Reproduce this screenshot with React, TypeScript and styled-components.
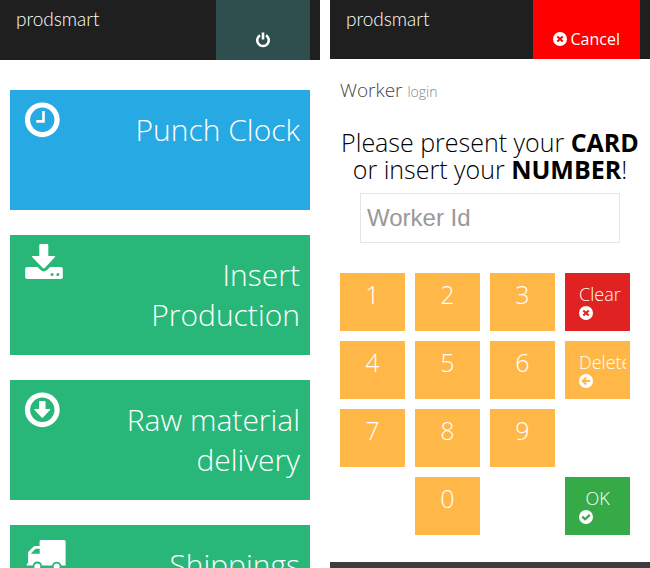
import React, { useState } from "react";
import styled, { createGlobalStyle } from "styled-components";

const GlobalStyle = createGlobalStyle`
  *, *::before, *::after { box-sizing: border-box; }
  body {
    margin: 0;
    background: #fff;
    color: #000;
    font-family: "Open Sans", sans-serif;
    font-weight: 300;
  }
  button, input { font: inherit; }
`;

const Page = styled.div`
  display: grid;
  grid-template-columns: minmax(0, 1fr) minmax(0, 1fr);
  column-gap: 10px;
  height: 100vh;
`;

const Panel = styled.section`
  display: flex;
  flex-direction: column;
  min-height: 0;
  overflow: auto;
  scrollbar-width: none;
`;

const TopBar = styled.header<{ $height: number }>`
  display: flex;
  flex: none;
  justify-content: space-between;
  height: ${(p) => p.$height}px;
  padding: 0 10px 0 16px;
  background: #1f1f1f;
`;

const Brand = styled.a`
  padding-top: 7px;
  color: #fff;
  font-family: Lato, sans-serif;
  font-size: 19px;
  font-weight: 300;
  line-height: 24px;
  text-decoration: none;
`;

const BarButton = styled.button<{ $tone: string }>`
  display: flex;
  align-items: center;
  justify-content: center;
  gap: 4px;
  min-width: 94px;
  padding: 19px 20px 0;
  border: 0;
  background: ${(p) => p.$tone};
  color: #fff;
  font-size: 16px;
  font-weight: 400;
  cursor: pointer;
`;

const TileList = styled.nav`
  display: flex;
  flex-direction: column;
  gap: 25px;
  padding: 30px 10px;
`;

const Tile = styled.a<{ $tone: string }>`
  display: flex;
  align-items: flex-start;
  justify-content: space-between;
  gap: 40px;
  min-height: 120px;
  padding: 8px 10px 8px 15px;
  background: ${(p) => p.$tone};
  color: #fff;
  text-decoration: none;
`;

const TileLabel = styled.span`
  padding-top: 12px;
  font-size: 30px;
  line-height: 40px;
  text-align: right;
`;

const Icon = styled.svg`
  display: block;
  flex: none;
`;

const Content = styled.main`
  padding: 17px 10px 27px;
`;

const Title = styled.h1`
  margin: 0;
  color: #444;
  font-size: 19px;
  font-weight: 300;
  line-height: 28px;
`;

const Subtitle = styled.small`
  color: #888;
  font-size: 14px;
`;

const Prompt = styled.label`
  display: block;
  margin-top: 23px;
  font-size: 25px;
  line-height: 27px;
  text-align: center;

  strong { font-weight: 700; }
`;

const WorkerInput = styled.input`
  display: block;
  width: calc(100% - 40px);
  height: 50px;
  margin: 10px 20px 0;
  padding: 0 6px;
  border: 1px solid #e5e5e5;
  border-radius: 0;
  font-family: "Liberation Sans", Arial, sans-serif;
  font-size: 24px;
  font-weight: 400;

  &::placeholder { color: #999; opacity: 1; }
`;

const Keypad = styled.div`
  display: grid;
  grid-template-columns: repeat(4, minmax(0, 1fr));
  gap: 10px;
  margin: 30px 10px 0 0;
`;

const DigitKey = styled.button<{ $column: number }>`
  grid-column: ${(p) => p.$column};
  height: 58px;
  padding: 0 0 16px;
  border: 0;
  background: #ffb848;
  color: #fff;
  font-size: 25px;
  font-weight: 300;
  cursor: pointer;
`;

const ActionKey = styled.button<{ $tone: string }>`
  display: flex;
  flex-direction: column;
  align-items: flex-start;
  grid-column: 4;
  height: 58px;
  padding: 10px 4px 0 14px;
  border: 0;
  background: ${(p) => p.$tone};
  color: #fff;
  cursor: pointer;
`;

const ActionLabel = styled.span`
  min-width: 37px;
  max-width: 100%;
  overflow: hidden;
  font-size: 18px;
  font-weight: 300;
  line-height: 23px;
  text-align: center;
`;

const Footer = styled.footer`
  flex: 1 0 6px;
  background: #3d3d3d;
`;

const PowerIcon = () => (
  <Icon width="16" height="16" viewBox="0 0 16 16" fill="none" stroke="#fff" aria-hidden="true">
    <path d="M5 3.3A5.8 5.8 0 1 0 11 3.3" strokeWidth="2.6" />
    <path d="M8 0.5V7.5" strokeWidth="2.6" />
  </Icon>
);

type RoundGlyph = "cross" | "back" | "check";

const glyphPaths: Record<RoundGlyph, string> = {
  cross: "M4.3 4.5L9.7 9.5M9.7 4.5L4.3 9.5",
  back: "M11.2 7H4M7.2 3.5L3.7 7L7.2 10.5",
  check: "M3.3 6.7L6.1 9.3L10.8 4.9",
};

const RoundIcon = ({ glyph, tone }: { glyph: RoundGlyph; tone: string }) => (
  <Icon width="14" height="14" viewBox="0 0 14 14" aria-hidden="true">
    <circle cx="7" cy="7" r="7" fill="#fff" />
    <path d={glyphPaths[glyph]} fill="none" stroke={tone} strokeWidth={glyph === "check" ? 2.3 : 2} />
  </Icon>
);

const ClockIcon = () => (
  <Icon width="42" height="40" viewBox="0 0 42 40" fill="none" stroke="#fff" aria-hidden="true">
    <circle cx="17.3" cy="21.8" r="14.8" strokeWidth="5.2" />
    <path d="M18.5 13V23.4H11.3" strokeWidth="2.6" />
  </Icon>
);

const InsertIcon = () => (
  <Icon width="42" height="40" viewBox="0 0 42 40" fill="#fff" aria-hidden="true">
    <path d="M15.5 1h6.6q1.2 0 1.2 1.2V13h5.8q1.8 0 .7 1.3L19.8 25q-1 .9-2 0L7.3 14.3Q6.2 13 8 13h6.3V2.2Q14.3 1 15.5 1Z" />
    <path fillRule="evenodd" d="M2 24h10.5l3.2 3.1q3.1 2.8 6.2 0L25.1 24H36q1.8 0 1.8 1.8v8.4Q37.8 36 36 36H2Q.2 36 .2 34.2v-8.4Q.2 24 2 24ZM27.1 30a1.5 1.5 0 1 0 0 3 1.5 1.5 0 0 0 0-3Zm5.8 0a1.5 1.5 0 1 0 0 3 1.5 1.5 0 0 0 0-3Z" />
  </Icon>
);

const DeliveryIcon = () => (
  <Icon width="42" height="40" viewBox="0 0 42 40" fill="#fff" aria-hidden="true">
    <circle cx="17.3" cy="21.8" r="14.8" fill="none" stroke="#fff" strokeWidth="5.2" />
    <path d="M14.6 13h5.4q.5 0 .5.5V21h4.1q1.2 0 .4.9L18 29.4q-.7.7-1.4 0L9.5 21.9q-.8-.9.4-.9h4.2v-7.5q0-.5.5-.5Z" />
  </Icon>
);

const TruckIcon = () => (
  <Icon width="42" height="40" viewBox="0 0 42 40" fill="#fff" aria-hidden="true">
    <path fillRule="evenodd" d="M16 7h23q1.6 0 1.6 1.6V32.5h-4.3a4.7 4.7 0 0 0-9.2 0H17a4.7 4.7 0 0 0-9.3 0H1.7v-1.3l1.4-1.5V20q0-1 .8-1.8l4-4Q9 13 10.3 13h4.3V8.4Q14.6 7 16 7ZM5.7 20.8h9V15.8h-3.5q-.7 0-1.2.5Z" />
    <circle cx="12.3" cy="33.5" r="3" />
    <circle cx="31.7" cy="33.5" r="3" />
  </Icon>
);

const GREEN = "#28b779";
const DIGITS = { top: [1, 2, 3], middle: [4, 5, 6], bottom: [7, 8, 9] };

const tiles = [
  { label: "Punch Clock", tone: "#27a9e3", Glyph: ClockIcon },
  { label: "Insert Production", tone: GREEN, Glyph: InsertIcon },
  { label: "Raw material delivery", tone: GREEN, Glyph: DeliveryIcon },
  { label: "Shippings", tone: GREEN, Glyph: TruckIcon },
];

const MainMenu = () => (
  <Panel>
    <TopBar $height={60}>
      <Brand href="#">prodsmart</Brand>
      <BarButton type="button" $tone="#2f4f4f" aria-label="Log out">
        <PowerIcon />
      </BarButton>
    </TopBar>
    <TileList>
      {tiles.map(({ label, tone, Glyph }) => (
        <Tile key={label} href="#" $tone={tone}>
          <Glyph />
          <TileLabel>{label}</TileLabel>
        </Tile>
      ))}
    </TileList>
  </Panel>
);

const WorkerLogin = () => {
  const [workerId, setWorkerId] = useState("");
  const digit = (value: number, column: number) => (
    <DigitKey key={value} type="button" $column={column} onClick={() => setWorkerId((id) => id + value)}>
      {value}
    </DigitKey>
  );

  return (
    <Panel>
      <TopBar $height={59}>
        <Brand href="#">prodsmart</Brand>
        <BarButton type="button" $tone="#ff0000">
          <RoundIcon glyph="cross" tone="#ff0000" />
          Cancel
        </BarButton>
      </TopBar>
      <Content>
        <Title>
          Worker <Subtitle>login</Subtitle>
        </Title>
        <Prompt htmlFor="worker-id">
          Please present your <strong>CARD</strong> or insert your <strong>NUMBER</strong>!
        </Prompt>
        <WorkerInput
          id="worker-id"
          placeholder="Worker Id"
          value={workerId}
          onChange={(event) => setWorkerId(event.target.value)}
        />
        <Keypad>
          {DIGITS.top.map((value, index) => digit(value, index + 1))}
          <ActionKey type="button" $tone="#e02222" onClick={() => setWorkerId("")}>
            <ActionLabel>Clear</ActionLabel>
            <RoundIcon glyph="cross" tone="#e02222" />
          </ActionKey>
          {DIGITS.middle.map((value, index) => digit(value, index + 1))}
          <ActionKey type="button" $tone="#ffb848" onClick={() => setWorkerId((id) => id.slice(0, -1))}>
            <ActionLabel>Delete</ActionLabel>
            <RoundIcon glyph="back" tone="#ffb848" />
          </ActionKey>
          {DIGITS.bottom.map((value, index) => digit(value, index + 1))}
          {digit(0, 2)}
          <ActionKey type="button" $tone="#35aa47">
            <ActionLabel>OK</ActionLabel>
            <RoundIcon glyph="check" tone="#35aa47" />
          </ActionKey>
        </Keypad>
      </Content>
      <Footer />
    </Panel>
  );
};

export default function App() {
  return (
    <>
      <GlobalStyle />
      <Page>
        <MainMenu />
        <WorkerLogin />
      </Page>
    </>
  );
}
